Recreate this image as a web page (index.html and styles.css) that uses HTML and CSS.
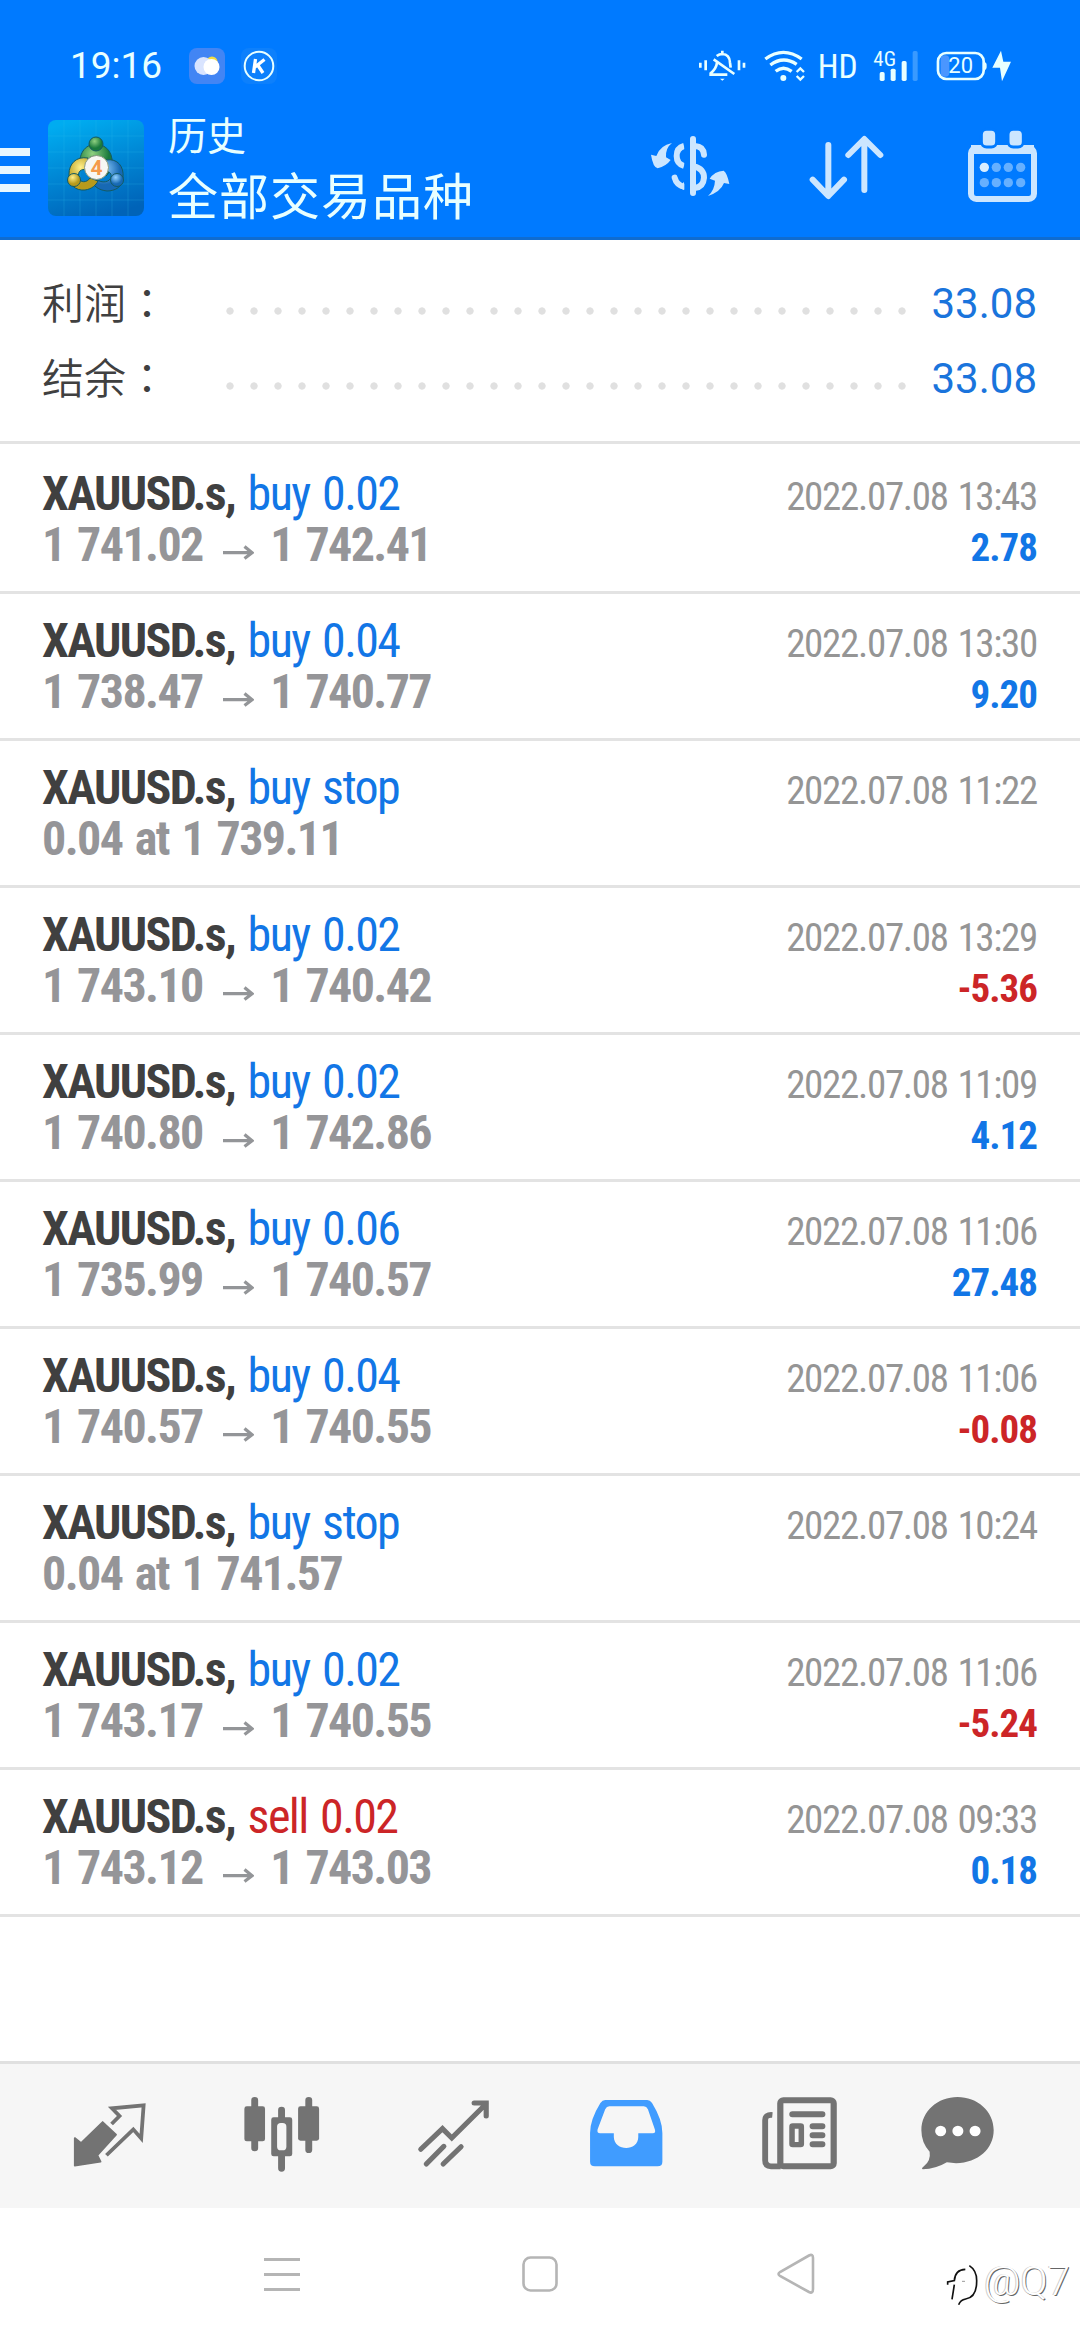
FILE: index.html
```
<!DOCTYPE html>
<html lang="zh-CN">
<head>
<meta charset="utf-8">
<title>历史</title>
<link rel="stylesheet" href="styles.css">
</head>
<body>
<svg class="defs" width="0" height="0">
  <symbol id="arrow" viewBox="0 0 31 15"><path d="M0 7.7H28M21.5 1.5L29 7.7L21.5 13.5" fill="none" stroke="#939598" stroke-width="3.2"/></symbol>
</svg>
<header class="header">
  <div class="status">
    <span class="clock">19:16</span>
    <svg class="weather" viewBox="0 0 36 36"><rect width="36" height="36" rx="8" fill="#4285f4"/><circle cx="23" cy="14" r="5.5" fill="#f3dc45"/><circle cx="14.500" cy="18" r="9" fill="#d9e4ff"/><circle cx="22.500" cy="19" r="8" fill="#fff"/></svg>
    <svg class="kbadge" viewBox="0 0 36 36"><rect width="36" height="36" rx="8" fill="#0d80fc"/><circle cx="18" cy="18" r="14.300" fill="none" stroke="#e8ffff" stroke-width="2"/><path d="M14.500 11L12.500 25M23.500 11.500L14 19M17 17.500L22 25" fill="none" stroke="#fff" stroke-width="3.300"/></svg>
    <svg class="signals" viewBox="232 54 944 108">
      <g fill="none" stroke="#e8ffff" stroke-width="7">
        <path d="M239 98V113M255 91V121M355 91V121M370 98V113" stroke-width="8"/>
        <path d="M305 62V72M288 78Q296 72 305 72Q327 73 328 98L330 113M279 88L341 132M289 98Q287 116 270 130V134H320" stroke-width="8"/>
        <path d="M298 146H312L305 152Z" fill="#e8ffff" stroke="none"/>
        <path d="M434 87Q488 47 543 87M449 105Q488 76 528 103M465 124Q488 105 513 124" stroke-width="10"/>
        <circle cx="488" cy="144" r="9" fill="#e8ffff" stroke="none"/>
        <path d="M528 126L539 115L550 126M528 138L539 149L550 138" stroke-width="7"/>
        <rect x="952" y="69" width="137" height="78" rx="25" stroke-width="8"/>
      </g>
      <rect x="960" y="76" width="26" height="64" rx="12" fill="#4a96ff"/>
      <path d="M1091 95Q1099 98 1098 108Q1099 118 1091 122Z" fill="#e8ffff"/>
      <g fill="#e8ffff"><rect x="777" y="126" width="15" height="27" rx="5"/><rect x="810" y="116" width="15" height="37" rx="5"/><rect x="843" y="93" width="15" height="60" rx="5"/><path d="M1141 62L1115 113H1138L1144 154L1171 95H1148Z"/></g>
      <rect x="876" y="63" width="15" height="90" rx="5" fill="#3a9aff"/>
      <text x="591" y="143" class="hd" textLength="120" lengthAdjust="spacingAndGlyphs">HD</text>
      <text x="758" y="107" class="g4" textLength="68" lengthAdjust="spacingAndGlyphs">4G</text>
      <text x="983" y="130" class="bat" textLength="74" lengthAdjust="spacingAndGlyphs">20</text>
    </svg>
  </div>
  <div class="toolbar">
    <div class="burger"><i></i><i></i><i></i></div>
    <svg class="logo" viewBox="0 0 96 96">
      <defs>
        <linearGradient id="sky" x1="0.300" y1="0" x2="0.600" y2="1"><stop offset="0" stop-color="#00acf0"/><stop offset=".5" stop-color="#0086d4"/><stop offset="1" stop-color="#0063b8"/></linearGradient>
        <radialGradient id="gr" cx=".4" cy=".3"><stop offset="0" stop-color="#8fd080"/><stop offset="1" stop-color="#1a7a3c"/></radialGradient>
        <radialGradient id="ye" cx=".4" cy=".3"><stop offset="0" stop-color="#fff08a"/><stop offset="1" stop-color="#b79a1c"/></radialGradient>
        <radialGradient id="bl" cx=".4" cy=".3"><stop offset="0" stop-color="#93d2ff"/><stop offset="1" stop-color="#1769b4"/></radialGradient>
      </defs>
      <rect width="96" height="96" rx="8" fill="url(#sky)"/>
      <path d="M16 0V96M32 0V96M48 0V96M64 0V96M80 0V96M0 16H96M0 32H96M0 48H96M0 64H96M0 80H96" stroke="#30c0f0" stroke-opacity=".22"/>
      <g stroke="#145a62" stroke-width="1">
        <path d="M31 50C31 33 36 25 48 24C60 25 66 34 64 49L58 56C60 46 58 36 48 36C40 36 37 42 37 48Z" fill="url(#gr)"/>
        <path d="M58 40C70 38 76 47 75 57C75 67 67 71 59 71C50 70 46 66 43 61L48 59C54 64 62 62 63 57C64 53 60 50 56 53Z" fill="url(#bl)"/>
        <path d="M40 38C28 36 21 44 21 54C20 65 28 71 37 70C44 69 48 65 50 61L42 58C39 63 32 63 31 58C29 52 33 48 39 50Z" fill="url(#ye)"/>
        <circle cx="48" cy="24" r="7" fill="url(#gr)"/><circle cx="26" cy="60" r="6.500" fill="url(#ye)"/><circle cx="69" cy="60" r="6.500" fill="url(#bl)"/>
        <circle cx="48.500" cy="47.500" r="12" fill="#f7f7f4" stroke="#8a9a80"/>
      </g>
      <text x="42.500" y="55" class="four">4</text>
    </svg>
    <div class="titles"><div class="sub">历史</div><div class="main">全部交易品种</div></div>
    <svg class="currency" viewBox="90 315 240 186">
      <g fill="none" stroke="#cce6ff" stroke-width="18"><path d="M219 327V489M252 374Q250 349 225 348M164 443Q170 465 192 470" stroke-linecap="round"/><path d="M192 348Q170 354 170 378Q170 401 192 408"/><path d="M222 409Q252 416 252 443Q250 471 224 474"/></g>
      <path d="M192 455V480L178 474ZM156 339Q136 354 138 382L152 390Q138 409 113 415Q99 412 93 374L109 378Q120 346 156 339ZM264 498Q284 480 285 452L269 446Q283 424 311 422Q322 430 328 462L312 459Q302 485 264 498Z" fill="#cce6ff"/>
      <path d="M193 335H210V495H193Z" fill="#007aff"/>
    </svg>
    <svg class="sort" viewBox="566 315 225 195"><path d="M624 345V496M577 449L624 498L671 449M732 480V330M684 375L732 327L780 375" fill="none" stroke="#cce6ff" stroke-width="18" stroke-linecap="round" stroke-linejoin="round"/></svg>
    <svg class="calendar" viewBox="1041 300 213 219">
      <rect x="1053" y="354" width="189" height="153" rx="16" fill="none" stroke="#cce6ff" stroke-width="18"/><path d="M1053 345H1242V372H1053Z" fill="#cce6ff"/>
      <g fill="#cce6ff" stroke="#007aff" stroke-width="9"><rect x="1084" y="298" width="46" height="53" rx="16"/><rect x="1164" y="298" width="46" height="53" rx="16"/></g>
      <g fill="#66b0ff"><circle cx="1093" cy="412" r="14" fill="#d9eeff"/><circle cx="1129" cy="412" r="14"/><circle cx="1165" cy="412" r="14"/><circle cx="1202" cy="412" r="14"/><circle cx="1093" cy="458" r="14"/><circle cx="1129" cy="458" r="14"/><circle cx="1165" cy="458" r="14"/><circle cx="1202" cy="458" r="14"/></g>
    </svg>
  </div>
</header>
<main class="content">
  <section class="summary">
    <div class="sum"><span class="label">利润<span class="colon" lang="zh-TW">：</span></span><span class="dots"></span><span class="val">33.08</span></div>
    <div class="sum"><span class="label">结余<span class="colon" lang="zh-TW">：</span></span><span class="dots"></span><span class="val">33.08</span></div>
  </section>
  <section class="deals">
    <div class="deal"><div class="line"><span><b>XAUUSD.s,</b> <span class="buy">buy 0.02</span></span><time>2022.07.08 13:43</time></div><div class="line price"><span>1 741.02<svg class="to"><use href="#arrow"/></svg>1 742.41</span><span class="profit">2.78</span></div></div>
    <div class="deal"><div class="line"><span><b>XAUUSD.s,</b> <span class="buy">buy 0.04</span></span><time>2022.07.08 13:30</time></div><div class="line price"><span>1 738.47<svg class="to"><use href="#arrow"/></svg>1 740.77</span><span class="profit">9.20</span></div></div>
    <div class="deal"><div class="line"><span><b>XAUUSD.s,</b> <span class="buy">buy stop</span></span><time>2022.07.08 11:22</time></div><div class="line price"><span>0.04 at 1 739.11</span></div></div>
    <div class="deal"><div class="line"><span><b>XAUUSD.s,</b> <span class="buy">buy 0.02</span></span><time>2022.07.08 13:29</time></div><div class="line price"><span>1 743.10<svg class="to"><use href="#arrow"/></svg>1 740.42</span><span class="profit loss">-5.36</span></div></div>
    <div class="deal"><div class="line"><span><b>XAUUSD.s,</b> <span class="buy">buy 0.02</span></span><time>2022.07.08 11:09</time></div><div class="line price"><span>1 740.80<svg class="to"><use href="#arrow"/></svg>1 742.86</span><span class="profit">4.12</span></div></div>
    <div class="deal"><div class="line"><span><b>XAUUSD.s,</b> <span class="buy">buy 0.06</span></span><time>2022.07.08 11:06</time></div><div class="line price"><span>1 735.99<svg class="to"><use href="#arrow"/></svg>1 740.57</span><span class="profit">27.48</span></div></div>
    <div class="deal"><div class="line"><span><b>XAUUSD.s,</b> <span class="buy">buy 0.04</span></span><time>2022.07.08 11:06</time></div><div class="line price"><span>1 740.57<svg class="to"><use href="#arrow"/></svg>1 740.55</span><span class="profit loss">-0.08</span></div></div>
    <div class="deal"><div class="line"><span><b>XAUUSD.s,</b> <span class="buy">buy stop</span></span><time>2022.07.08 10:24</time></div><div class="line price"><span>0.04 at 1 741.57</span></div></div>
    <div class="deal"><div class="line"><span><b>XAUUSD.s,</b> <span class="buy">buy 0.02</span></span><time>2022.07.08 11:06</time></div><div class="line price"><span>1 743.17<svg class="to"><use href="#arrow"/></svg>1 740.55</span><span class="profit loss">-5.24</span></div></div>
    <div class="deal"><div class="line"><span><b>XAUUSD.s,</b> <span class="sell">sell 0.02</span></span><time>2022.07.08 09:33</time></div><div class="line price"><span>1 743.12<svg class="to"><use href="#arrow"/></svg>1 743.03</span><span class="profit">0.18</span></div></div>
  </section>
</main>
<nav class="tabs">
  <svg class="t1" viewBox="210 140 220 224" preserveAspectRatio="none"><path d="M299 215L338 253L284 315L293 334L218 346V263L236 278Z" fill="#737373" stroke="#737373" stroke-width="5" stroke-linejoin="round"/><path d="M325 221L348 197L326 174L418 165L411 264L388 237L310 315" fill="none" stroke="#737373" stroke-width="11"/></svg>
  <svg class="t2" viewBox="705 140 225 224" preserveAspectRatio="none"><path d="M739 150V293M896 150V298M817 179V205M817 315V354" stroke="#737373" stroke-width="20" stroke-linecap="round"/><g fill="#737373"><rect x="709" y="168" width="60" height="105" rx="7"/><rect x="865" y="168" width="61" height="103" rx="7"/><path fill-rule="evenodd" d="M794 201H841Q848 201 848 208V311Q848 318 841 318H794Q787 318 787 311V208Q787 201 794 201ZM815 218Q804 218 804 229V289Q804 300 815 300H820Q831 300 831 289V229Q831 218 820 218Z"/></g></svg>
  <svg class="t3" viewBox="1210 140 215 224" preserveAspectRatio="none"><path d="M1221 297L1284 235L1311 263L1411 160M1376 158H1411V197M1237 341L1288 288M1286 341L1338 289" fill="none" stroke="#737373" stroke-width="15" stroke-linecap="round"/></svg>
  <svg class="t4" viewBox="140 140 222 224" preserveAspectRatio="none"><path fill-rule="evenodd" fill="#409cff" d="M190 149H312Q320 149 326 158Q356 208 356 248V334Q356 348 342 348H160Q146 348 146 334V248Q146 208 176 158Q182 149 190 149ZM202 168Q194 168 190 177L168 237Q165 249 175 249H215V260C216 304 286 304 286 260V249H328Q338 249 334 237L314 177Q310 168 302 168Z"/></svg>
  <svg class="t5" viewBox="640 140 230 224" preserveAspectRatio="none"><rect x="699" y="150" width="155" height="198" rx="9" fill="none" stroke="#737373" stroke-width="18"/><path d="M676 194Q655 192 655 210V330Q655 348 672 348H700" fill="none" stroke="#737373" stroke-width="17"/><path d="M734 192H821M793 228H821M793 255H821M793 282H821" stroke="#737373" stroke-width="18" stroke-linecap="round"/><rect x="733" y="227" width="27" height="56" rx="2" fill="none" stroke="#737373" stroke-width="16"/></svg>
  <svg class="t6" viewBox="1104 140 220 224" preserveAspectRatio="none"><path d="M1213 140C1270 140 1318 182 1318 240C1318 302 1260 350 1182 336Q1150 356 1112 357Q1106 355 1116 347Q1136 330 1132 304Q1108 278 1108 240C1108 182 1156 140 1213 140Z" fill="#737373"/><g fill="#fff"><circle cx="1164" cy="242" r="16"/><circle cx="1214" cy="242" r="16"/><circle cx="1264" cy="242" r="16"/></g></svg>
</nav>
<footer class="sysnav">
  <svg width="36" height="36" viewBox="0 0 36 36"><path d="M0 3.500H36M0 18.500H36M0 33.500H36" stroke="#b5b5b5" stroke-width="3"/></svg>
  <svg width="36" height="36" viewBox="0 0 36 36"><rect x="1.500" y="1.500" width="33" height="33" rx="7" fill="none" stroke="#b5b5b5" stroke-width="2.600"/></svg>
  <svg width="38" height="42" viewBox="0 0 38 42"><path d="M32 2.500Q36 0.500 36 5V36Q36 41 32 39L3 23Q0 21 3 19Z" fill="none" stroke="#b5b5b5" stroke-width="2.600"/></svg>
  <div class="mark"><svg width="34" height="44" viewBox="20 72 102 132"><path d="M35 178L42 134M22 134V126L42 122Q44 89 75 88" fill="none" stroke="#111" stroke-width="5"/><path d="M65 124H74" stroke="#999" stroke-width="3"/><path d="M87 77Q110 92 109 124Q109 172 76 177Q60 180 55 194" fill="none" stroke="#111" stroke-width="5"/></svg><span>@Q7</span></div>
</footer>
</body>
</html>
```
FILE: styles.css
```
*{box-sizing:border-box}
body{margin:0;width:1080px;height:2340px;display:flex;flex-direction:column;background:#fff;font-family:"Roboto Condensed",Roboto,"Noto Sans CJK SC",sans-serif;overflow:hidden}
svg{display:block;flex:none;overflow:visible}
.defs{position:absolute}
.header{height:240px;background:#007aff;border-bottom:3px solid #0f6cd0;color:#e8ffff}
.status{display:flex;height:108px;padding:48px 0 0 70px}
.clock{font:37px/36px Roboto,sans-serif;width:119px}
.weather,.kbadge{width:36px;height:36px}
.kbadge{margin-left:16px}
.signals{width:314.67px;height:36px;margin-left:421px}
.hd{font:400 100px "Roboto Condensed",sans-serif;fill:#e8ffff}
.g4{font:400 60px "Roboto Condensed",sans-serif;fill:#e8ffff}
.bat{font:400 65px Roboto,sans-serif;fill:#e8ffff}
.toolbar{display:flex;height:129px;align-items:flex-start}
.burger{width:30px;padding-top:40px;display:grid;gap:10px}
.burger i{height:8px;background:#e8f8ff}
.logo{width:96px;height:96px;margin:12px 0 0 18px}
.four{font:700 21px Roboto,sans-serif;fill:#f59a4a}
.titles{margin-left:24px;width:482px;font-family:"Noto Sans CJK SC",sans-serif;font-weight:400}
.sub{font-size:39px;line-height:52px;margin-top:-1px}
.main{font-size:50px;letter-spacing:1px;line-height:64px;margin-top:2px}
.currency{width:80px;height:62px;margin-top:27px}
.sort{width:75px;height:65px;margin:27px 0 0 78.700px}
.calendar{width:71px;height:73px;margin:22px 0 0 83.300px}
.content{height:1821px}
.summary{height:204px;border-bottom:3px solid #e3e3e3;padding:26px 43px 0 42px}
.sum{display:flex;height:75px}
.label{font:350 42px/69px "Noto Sans CJK SC",sans-serif;color:#404040;width:184px}
.colon{font-family:"Noto Sans CJK TC",sans-serif}
.dots{width:696px;height:8px;margin-top:41px;flex:none;background:radial-gradient(circle at 4px 4px,#e0e0e0 3.300px,transparent 4px) 0 0/24px 8px}
.val{margin-left:auto;font:42px/75px Roboto,sans-serif;color:#1a74dc}
.deal{height:147px;padding:21px 43px 0 42px;border-bottom:3px solid #e3e3e3}
.deal:first-child{height:150px;padding-top:24px}
.line{display:flex;justify-content:space-between;align-items:baseline;font-size:48px;line-height:51px;height:51px;letter-spacing:-1.600px;word-spacing:3px;color:#404040;white-space:nowrap}
.buy{color:#1276e6}
.sell{color:#cc2527}
time{font-size:39px;letter-spacing:-1.300px;word-spacing:2px;color:#959595}
.price{font-weight:700;color:#959598}
.profit{font-size:39px;letter-spacing:-1px;color:#1276e6}
.profit.loss{color:#cc2527}
.to{display:inline-block;width:31px;height:15px;margin:0 16px 0 20.500px;vertical-align:1px}
.tabs{height:147px;border-top:3px solid #e0e0e0;background:#f6f6f6;display:flex;padding:32.700px 0 0 72.300px}
.tabs svg{height:74.670px}
.t1{width:75.760px}
.t2{width:77.480px;margin-left:94.700px}
.t3{width:74.040px;margin-left:96.420px}
.t4{width:76.450px;margin-left:97.500px}
.t5{width:79.200px;margin-left:95.730px}
.t6{width:75.760px;margin-left:80.580px}
.sysnav{height:132px;display:flex;align-items:flex-start;padding:48px 0 0 264px}
.sysnav>svg:nth-child(2){margin-left:222px}
.sysnav>svg:nth-child(3){margin:-3px 0 0 219px}
.mark{display:flex;margin:8px 0 0 132px;color:#fff;font:300 40px/44px Roboto,sans-serif;text-shadow:1px 1px 0 #666,-1px 0 0 #ccc}
.mark span{margin:-4px 0 0 3px}
```
